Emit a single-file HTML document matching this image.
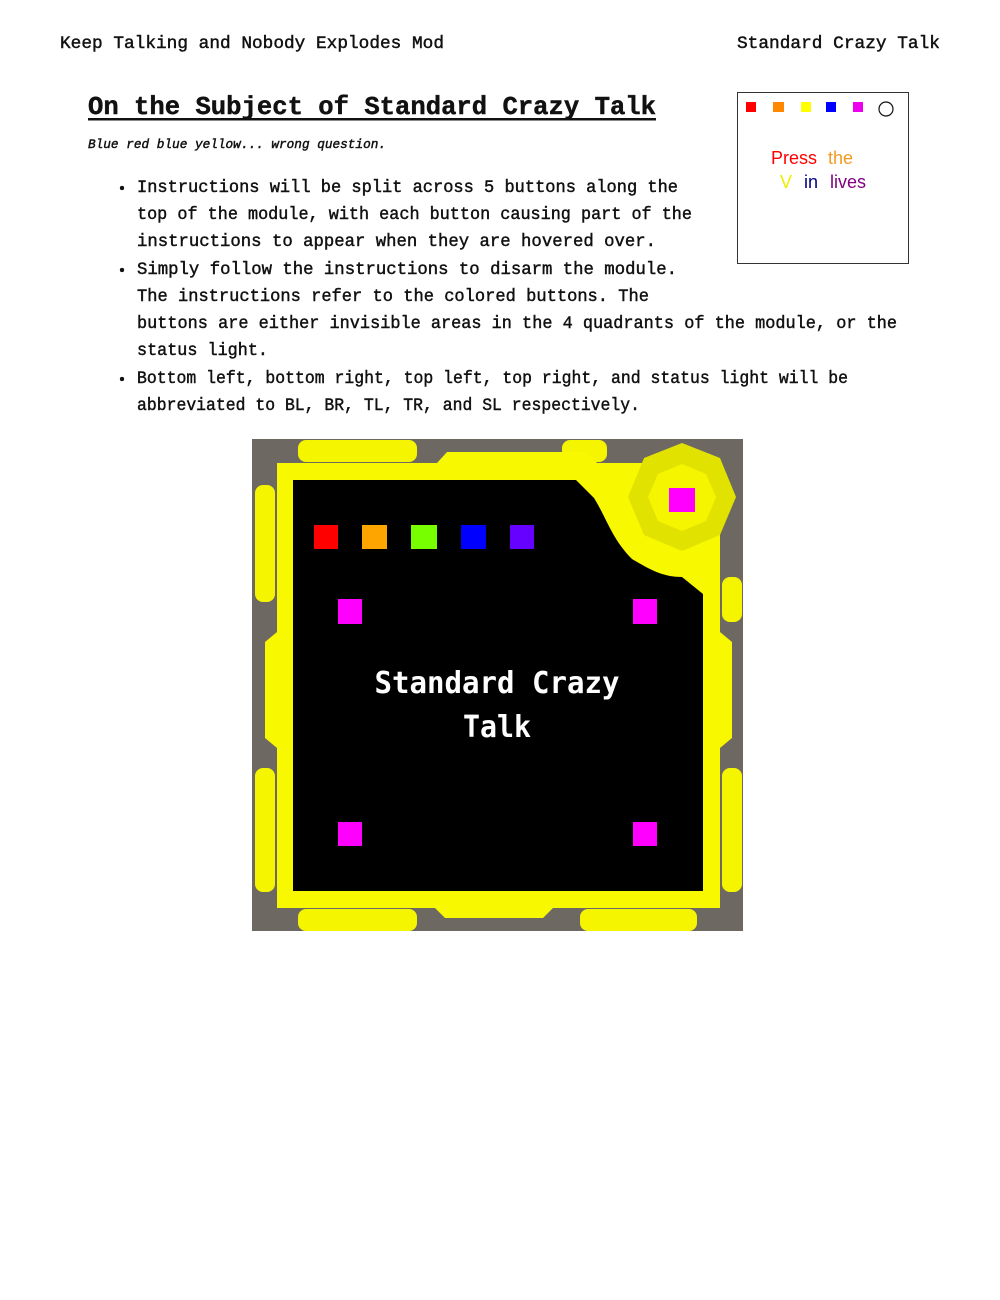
<!DOCTYPE html>
<html><head><meta charset="utf-8"><style>
html,body{margin:0;padding:0;background:#fff;width:1000px;height:1300px;overflow:hidden}
svg{display:block}
.t{font-family:"Liberation Mono",monospace;fill:#111;stroke:#111;stroke-width:0.45}
</style></head><body>
<svg width="1000" height="1300" viewBox="0 0 1000 1300" xmlns="http://www.w3.org/2000/svg">
<text class="t" x="60" y="48" font-size="17.5" textLength="384" lengthAdjust="spacingAndGlyphs">Keep Talking and Nobody Explodes Mod</text>
<text class="t" x="737" y="48" font-size="17.5" textLength="203" lengthAdjust="spacingAndGlyphs">Standard Crazy Talk</text>
<text class="t" x="88" y="114" font-size="26" font-weight="bold" textLength="568" lengthAdjust="spacingAndGlyphs">On the Subject of Standard Crazy Talk</text>
<rect x="88" y="118" width="568" height="2.5" fill="#111"/>
<text class="t" x="88" y="148" font-size="13" font-style="italic" textLength="298" lengthAdjust="spacingAndGlyphs">Blue red blue yellow... wrong question.</text>
<g class="t" font-size="17.5">
<circle cx="122" cy="188" r="2" fill="#111"/><circle cx="122" cy="270" r="2" fill="#111"/><circle cx="122" cy="379" r="2" fill="#111"/>
<text x="137" y="192" textLength="541" lengthAdjust="spacingAndGlyphs">Instructions will be split across 5 buttons along the</text>
<text x="137" y="219" textLength="555" lengthAdjust="spacingAndGlyphs">top of the module, with each button causing part of the</text>
<text x="137" y="246" textLength="519" lengthAdjust="spacingAndGlyphs">instructions to appear when they are hovered over.</text>
<text x="137" y="274" textLength="540" lengthAdjust="spacingAndGlyphs">Simply follow the instructions to disarm the module.</text>
<text x="137" y="301" textLength="512" lengthAdjust="spacingAndGlyphs">The instructions refer to the colored buttons. The</text>
<text x="137" y="328" textLength="760" lengthAdjust="spacingAndGlyphs">buttons are either invisible areas in the 4 quadrants of the module, or the</text>
<text x="137" y="355" textLength="131" lengthAdjust="spacingAndGlyphs">status light.</text>
<text x="137" y="383" textLength="711" lengthAdjust="spacingAndGlyphs">Bottom left, bottom right, top left, top right, and status light will be</text>
<text x="137" y="410" textLength="503" lengthAdjust="spacingAndGlyphs">abbreviated to BL, BR, TL, TR, and SL respectively.</text>
</g>
<rect x="737.5" y="92.5" width="171" height="171" fill="#fff" stroke="#333" stroke-width="1"/>
<rect x="746" y="102" width="10" height="10" fill="#f00"/>
<rect x="773" y="102" width="11" height="10" fill="#f80"/>
<rect x="801" y="102" width="10" height="10" fill="#ff0"/>
<rect x="826" y="102" width="10" height="10" fill="#00f"/>
<rect x="853" y="102" width="10" height="10" fill="#e0e"/>
<circle cx="886" cy="109" r="7" fill="none" stroke="#111" stroke-width="1.2"/>
<g font-family="Liberation Sans, sans-serif" font-size="18">
<text x="771" y="164" fill="#f00">Press</text><text x="828" y="164" fill="#f39a1e">the</text>
<text x="780" y="188" fill="#ee0">V</text><text x="804" y="188" fill="#000080">in</text><text x="830" y="188" fill="#800080">lives</text>
</g>
<g transform="translate(252,439)">
<rect width="491" height="492" fill="#6d6862"/>
<g fill="#f5f500">
<rect x="46" y="1" width="119" height="22" rx="8"/>
<rect x="310" y="1" width="45" height="22" rx="8"/>
<rect x="46" y="470" width="119" height="22" rx="8"/>
<rect x="328" y="470" width="117" height="22" rx="8"/>
<rect x="3" y="46" width="20" height="117" rx="8"/>
<rect x="3" y="329" width="20" height="124" rx="8"/>
<rect x="470" y="138" width="20" height="45" rx="8"/>
<rect x="470" y="329" width="20" height="124" rx="8"/>
</g>
<g fill="#f8f800">
<rect x="25" y="24" width="443" height="445"/>
<polygon points="195,13 335,13 345,24 185,24"/>
<polygon points="183,469 301,469 291,479 193,479"/>
<polygon points="13,203 25,193 25,309 13,299"/>
<polygon points="468,193 480,203 480,299 468,309"/>
</g>
<path d="M41,41 H324 L342,59 C355,80 360,100 380,120 C400,132 412,138 430,138 L451,155 V452 H41 Z" fill="#000"/>
<polygon points="430,4 468,19 484,58 468,96 430,112 392,96 376,58 392,19" fill="#e2e200"/>
<polygon points="430,25 454,35 464,58 454,82 430,92 406,82 396,58 406,35" fill="#f5f500"/>
<rect x="417" y="49" width="26" height="24" fill="#f0f"/>
<rect x="62" y="86" width="24" height="24" fill="#f00"/>
<rect x="110" y="86" width="25" height="24" fill="#ffa500"/>
<rect x="159" y="86" width="26" height="24" fill="#7f0"/>
<rect x="209" y="86" width="25" height="24" fill="#00f"/>
<rect x="258" y="86" width="24" height="24" fill="#60f"/>
<rect x="86" y="160" width="24" height="25" fill="#f0f"/>
<rect x="381" y="160" width="24" height="25" fill="#f0f"/>
<rect x="86" y="383" width="24" height="24" fill="#f0f"/>
<rect x="381" y="383" width="24" height="24" fill="#f0f"/>
<g font-family="DejaVu Sans Mono, Liberation Mono, monospace" font-size="30" font-weight="bold" fill="#fff" text-anchor="middle">
<text x="245" y="254" textLength="245" lengthAdjust="spacingAndGlyphs">Standard Crazy</text>
<text x="245" y="298" textLength="68" lengthAdjust="spacingAndGlyphs">Talk</text>
</g>
</g>
</svg>
</body></html>
